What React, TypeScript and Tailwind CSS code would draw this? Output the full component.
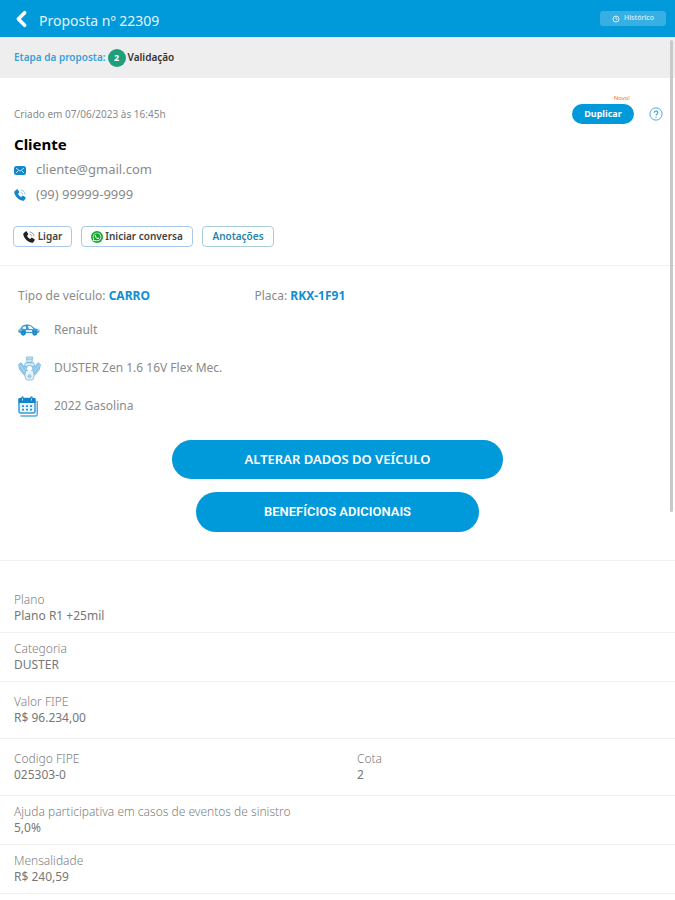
import { FC, ReactNode } from "react";
import { FaWhatsapp } from "react-icons/fa";

type IconProps = { className?: string };

const PhoneIcon: FC<IconProps> = ({ className }) => (
  <svg viewBox="0 0 24 24" className={className} fill="currentColor" aria-hidden="true">
    <path d="M1.600 4 5.400.8c.8-.6 1.800-.4 2.300.5l2.500 4.300c.5.8.3 1.700-.4 2.300L8 9.400c1.300 2.900 3.600 5.200 6.500 6.500l1.600-2c.6-.7 1.500-.8 2.300-.4l4.500 2.800c.8.5 1 1.500.4 2.300l-2.700 3.700c-.7 1-1.800 1.300-3 1C9 21.900 1.800 14.800.600 7c-.2-1.200.1-2.300 1-3Z" />
    <path
      d="M14 6.500c2 .3 3.300 1.700 3.600 3.600M14 2c4.500.5 7.500 3.500 8 8"
      fill="none"
      stroke="currentColor"
      strokeWidth="1.500"
      strokeLinecap="round"
      opacity=".6"
    />
  </svg>
);

const MailIcon: FC<IconProps> = ({ className }) => (
  <svg viewBox="0 0 24 18" className={className} aria-hidden="true">
    <rect width="24" height="18" rx="5" fill="currentColor" />
    <path d="m4 4 8 6.500L20 4M4 14l5-5M20 14l-5-5" fill="none" stroke="#d5ecf9" strokeWidth="1.800" />
  </svg>
);

const CarIcon: FC<IconProps> = ({ className }) => (
  <svg viewBox="0 0 44 24" className={className} aria-hidden="true">
    <path
      d="M1 17c-1-5 0-7 4-8l3-5c5-4 15-4 20 0l6 5c6 0 9 3 9 7l-3 2h-2a5 5 0 0 0-9 0H15a5 5 0 0 0-9 0Z"
      fill="#3a9bd6"
    />
    <path d="m8 9 3-4h5v5ZM20 4h5l6 6h-9Z" fill="#fff" />
    <path d="M16 14h12" stroke="#d5ecf9" strokeWidth="4" />
    <path d="M2 12h5M38 13h5" stroke="#8ac4e8" strokeWidth="3" />
    <circle cx="10.500" cy="18.500" r="4.800" fill="#1583c7" />
    <circle cx="33.500" cy="18.500" r="4.800" fill="#1583c7" />
    <circle cx="10.500" cy="18.500" r="1.500" fill="#5aaadb" />
    <circle cx="33.500" cy="18.500" r="1.500" fill="#5aaadb" />
  </svg>
);

const EngineIcon: FC<IconProps> = ({ className }) => (
  <svg viewBox="0 0 44 48" className={className} fill="none" stroke="#6fb3de" strokeWidth="1.500" aria-hidden="true">
    <path d="M16 2h12v4H16zM17 6v6h10V6M14 13h16l2 7H12Z" fill="#d5eaf7" />
    <path d="M12 21 6 13l-5 3 2 10 7 9 6 4h12l6-4 7-9 2-10-5-3-6 8Z" fill="#a9d3ee" />
    <path d="m5 16 11 14M3 21l10 13M39 16 28 30M41 21 31 34" />
    <circle cx="22" cy="24" r="6" fill="#fff" />
    <path d="M15 29c-3 6-2 12 1 17h12c3-5 4-11 1-17" fill="#e6f3fb" />
    <circle cx="22" cy="39" r="4" fill="#9ccdea" stroke="none" />
  </svg>
);

const CalendarIcon: FC<IconProps> = ({ className }) => (
  <svg viewBox="0 0 42 42" className={className} aria-hidden="true">
    <path d="M38.500 10v27a3 3 0 0 1-3 3H5" fill="none" stroke="#5aaadb" strokeWidth="3" />
    <rect x="2" y="5" width="32" height="29" rx="3" fill="#e6f3fb" stroke="#3a9bd6" strokeWidth="3" />
    <path d="M1 6a2 2 0 0 1 2-2h30a2 2 0 0 1 2 2v8H1z" fill="#1583c7" />
    <path d="M9 1v7M27 1v7" stroke="#1583c7" strokeWidth="4" />
    <path d="M9 5v4M27 5v4" stroke="#fff" strokeWidth="1.500" />
    <path d="M8 20h20M8 27h20" stroke="#2b91d0" strokeWidth="3.500" strokeDasharray="4 4" />
  </svg>
);

const Row: FC<{ children: ReactNode; size?: "sm" | "md" | "first" }> = ({ children, size = "sm" }) => {
  const padding = {
    sm: "py-[8px]",
    md: "py-[12px]",
    first: "pt-[31px] pb-[8px]",
  }[size];

  return <dl className={`grid grid-cols-[53%_1fr] border-b border-[#f0f0f0] px-[14px] ${padding}`}>{children}</dl>;
};

const Field: FC<{ label: string; value: string }> = ({ label, value }) => (
  <div className="text-[12px] leading-[16px]">
    <dt className="font-light text-[#808080]">{label}</dt>
    <dd className="text-[#777]">{value}</dd>
  </div>
);

const VehicleItem: FC<{ icon: ReactNode; children: ReactNode }> = ({ icon, children }) => (
  <li className="flex h-[38px] items-center">
    <span className="flex w-[36px] shrink-0 items-center">{icon}</span>
    <span>{children}</span>
  </li>
);

export default function App() {
  return (
    <div className="relative min-h-screen bg-white font-['Noto_Sans','Open_Sans',sans-serif] text-[12px] text-[#8a8a8a]">
      <header className="flex h-[37px] items-center bg-[#0099da] pr-[9px] pl-[14px] text-white">
        <button type="button" aria-label="Voltar" className="mr-[10px]">
          <svg
            viewBox="0 0 16 20"
            className="h-[18px] w-[15px]"
            fill="none"
            stroke="currentColor"
            strokeWidth="4"
            strokeLinejoin="round"
            strokeLinecap="round"
          >
            <path d="m11.500 3-7 7 7 7" />
          </svg>
        </button>
        <h1 className="mt-[4px] text-[14px] text-[#e4f4fc]">Proposta nº 22309</h1>
        <button
          type="button"
          className="ml-auto flex h-[15px] w-[66px] items-center justify-center gap-[4px] rounded-[3px] bg-[#38afe2] text-[7px] font-medium text-[#d8f0fb]"
        >
          <svg viewBox="0 0 16 16" className="size-[8px]" fill="none" stroke="currentColor" strokeWidth="2">
            <circle cx="8" cy="8" r="6" />
            <path d="M8 4v4l3 1" />
          </svg>
          Histórico
        </button>
      </header>

      <div className="flex h-[41px] items-center bg-[#eee] px-[14px] text-[10px] font-semibold">
        <span className="text-[#3a9fd8]">Etapa da proposta:</span>
        <span className="mx-[2px] flex size-[18px] items-center justify-center rounded-full bg-[#1f9e7c] text-[9px] font-bold text-white">
          2
        </span>
        <span className="text-[#333]">Validação</span>
      </div>

      <section className="border-b border-[#f0f0f0] pt-[24px] pr-[12px] pb-[18px] pl-[14px]">
        <div className="flex h-[24px] items-center">
          <p className="text-[10px]">Criado em 07/06/2023 às 16:45h</p>
          <div className="relative ml-auto">
            <span className="absolute -top-[10px] right-[4px] text-[6px] leading-[8px] text-[#f5703c]">Novo!</span>
            <button
              type="button"
              className="block h-[20px] w-[62px] rounded-full bg-[#0099da] text-[9px] font-bold text-white"
            >
              Duplicar
            </button>
          </div>
          <button type="button" aria-label="Ajuda" className="ml-[15px] text-[#3a9fd8]">
            <svg viewBox="0 0 16 16" className="size-[14px]" fill="none" stroke="currentColor">
              <circle cx="8" cy="8" r="7" />
              <path d="M6 6.500a2 2 0 1 1 3 1.700c-.7.4-1 .7-1 1.500M8 11v1.300" strokeWidth="1.300" />
            </svg>
          </button>
        </div>

        <h2 className="mt-[8px] text-[15px] leading-[20px] font-bold text-black">Cliente</h2>
        <p className="mt-[4px] flex h-[24px] items-center text-[13px]">
          <MailIcon className="mr-[10px] h-[9px] w-[12px] text-[#1287cb]" />
          cliente@gmail.com
        </p>
        <p className="flex h-[26px] items-center text-[13px]">
          <PhoneIcon className="mr-[10px] size-[12px] text-[#1287cb]" />
          (99) 99999-9999
        </p>

        <div className="-ml-px mt-[18px] flex gap-[9px] text-[10px] font-semibold text-[#444]">
          <button
            type="button"
            className="flex h-[21px] w-[59px] items-center justify-center gap-[3px] rounded-[4px] border border-[#a9c9ea]"
          >
            <PhoneIcon className="size-[12px] text-[#222]" />
            Ligar
          </button>
          <button
            type="button"
            className="flex h-[21px] w-[112px] items-center justify-center gap-[2px] rounded-[4px] border border-[#a9c9ea]"
          >
            <span className="flex size-[12px] items-center justify-center rounded-full bg-[#14a52c] text-white">
              <FaWhatsapp size={10} />
            </span>
            Iniciar conversa
          </button>
          <button type="button" className="h-[21px] w-[72px] rounded-[4px] border border-[#a8cdd8] text-[#2686ae]">
            Anotações
          </button>
        </div>
      </section>

      <section className="border-b border-[#f0f0f0] pt-[20px] pb-[28px]">
        <div className="flex px-[18px] leading-[20px]">
          <p className="w-[37%]">
            Tipo de veículo: <strong className="text-[#0e8fd3]">CARRO</strong>
          </p>
          <p>
            Placa: <strong className="text-[#0e8fd3]">RKX-1F91</strong>
          </p>
        </div>

        <ul className="mt-[5px] px-[18px]">
          <VehicleItem icon={<CarIcon className="h-[12px] w-[22px]" />}>Renault</VehicleItem>
          <VehicleItem icon={<EngineIcon className="h-[25px] w-[23px]" />}>DUSTER Zen 1.6 16V Flex Mec.</VehicleItem>
          <VehicleItem icon={<CalendarIcon className="size-[21px]" />}>2022 Gasolina</VehicleItem>
        </ul>

        <div className="mt-[15px] flex flex-col items-center gap-[13px] text-[13px] text-white">
          <button type="button" className="h-[39px] w-[49%] rounded-full bg-[#0099da] font-semibold">
            ALTERAR DADOS DO VEÍCULO
          </button>
          <button
            type="button"
            className="h-[40px] w-[42%] rounded-full bg-[#0099da] font-[Roboto,sans-serif] font-semibold"
          >
            BENEFÍCIOS ADICIONAIS
          </button>
        </div>
      </section>

      <Row size="first">
        <Field label="Plano" value="Plano R1 +25mil" />
      </Row>
      <Row>
        <Field label="Categoria" value="DUSTER" />
      </Row>
      <Row size="md">
        <Field label="Valor FIPE" value="R$ 96.234,00" />
      </Row>
      <Row size="md">
        <Field label="Codigo FIPE" value="025303-0" />
        <Field label="Cota" value="2" />
      </Row>
      <Row>
        <Field label="Ajuda participativa em casos de eventos de sinistro" value="5,0%" />
      </Row>
      <Row>
        <Field label="Mensalidade" value="R$ 240,59" />
      </Row>

      <div className="absolute top-[40px] right-[2px] h-[472px] w-[3px] rounded-full bg-[#c9c9c9]" />
    </div>
  );
}
